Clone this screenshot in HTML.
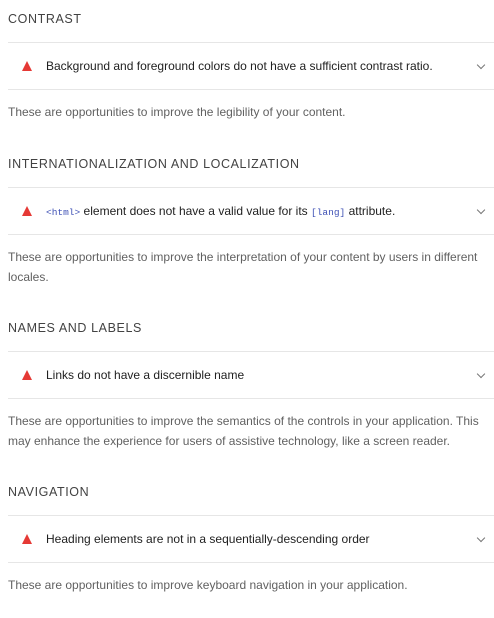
<!DOCTYPE html>
<html><head><style>
body{margin:0;background:#fff;font-family:"Liberation Sans",Arial,sans-serif;width:494px;overflow:hidden}
.sec{position:relative;margin-left:8px}
.h{height:42px;line-height:38px;font-size:12.5px;letter-spacing:.6px;color:#424242;text-transform:uppercase}
.row{height:46px;border-top:1px solid #e6e6e6;border-bottom:1px solid #e6e6e6;position:relative;font-size:12px;color:#212121;line-height:46px;padding-left:38px}
.tri{position:absolute;left:14px;top:18px;width:0;height:0;border-left:5.5px solid transparent;border-right:5.5px solid transparent;border-bottom:10px solid #e53935}
.chev{position:absolute;right:10px;top:19px;width:5px;height:5px;border-right:1.3px solid #777;border-bottom:1.3px solid #777;transform:rotate(45deg)}
code{font-family:"Liberation Mono",monospace;font-size:9.5px;color:#3f51b5}
.d{font-size:12px;color:#616161;line-height:20px;padding-top:12px;padding-bottom:23px;padding-right:8px}
.d2{padding-bottom:22px}
</style></head><body>
<div class="sec"><div class="h">Contrast</div><div class="row"><span class="tri"></span>Background and foreground colors do not have a sufficient contrast ratio.<span class="chev"></span></div><div class="d">These are opportunities to improve the legibility of your content.</div></div>
<div class="sec"><div class="h">Internationalization and localization</div><div class="row"><span class="tri"></span><code>&lt;html&gt;</code> element does not have a valid value for its <code>[lang]</code> attribute.<span class="chev"></span></div><div class="d d2">These are opportunities to improve the interpretation of your content by users in different locales.</div></div>
<div class="sec"><div class="h">Names and labels</div><div class="row"><span class="tri"></span>Links do not have a discernible name<span class="chev"></span></div><div class="d d2">These are opportunities to improve the semantics of the controls in your application. This may enhance the experience for users of assistive technology, like a screen reader.</div></div>
<div class="sec"><div class="h">Navigation</div><div class="row"><span class="tri"></span>Heading elements are not in a sequentially-descending order<span class="chev"></span></div><div class="d">These are opportunities to improve keyboard navigation in your application.</div></div>
</body></html>
